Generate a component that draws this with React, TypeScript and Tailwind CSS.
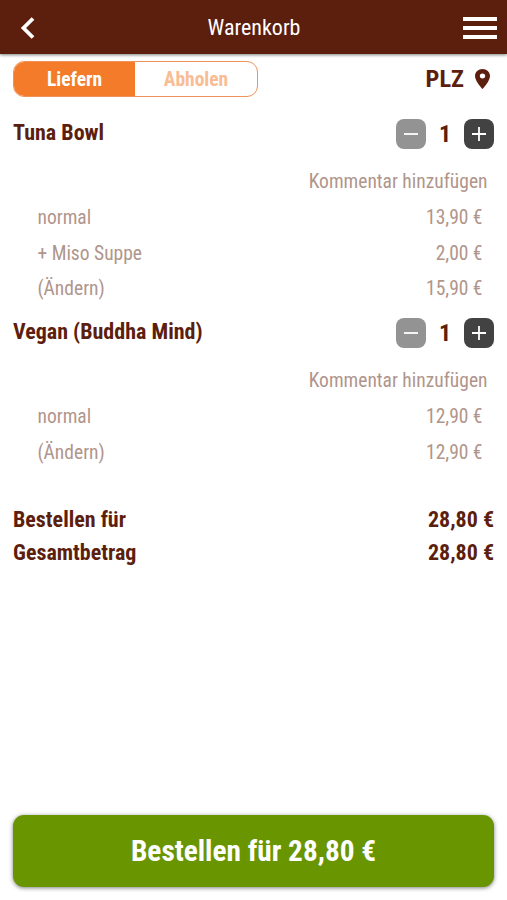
type Line = { label: string; price: string };
type Item = { name: string; quantity: number; lines: Line[] };

const items: Item[] = [
  {
    name: "Tuna Bowl",
    quantity: 1,
    lines: [
      { label: "normal", price: "13,90 €" },
      { label: "+ Miso Suppe", price: "2,00 €" },
      { label: "(Ändern)", price: "15,90 €" },
    ],
  },
  {
    name: "Vegan (Buddha Mind)",
    quantity: 1,
    lines: [
      { label: "normal", price: "12,90 €" },
      { label: "(Ändern)", price: "12,90 €" },
    ],
  },
];

const totals: Line[] = [
  { label: "Bestellen für", price: "28,80 €" },
  { label: "Gesamtbetrag", price: "28,80 €" },
];

function Header() {
  return (
    <header className="grid h-[54px] shrink-0 grid-cols-[1fr_auto_1fr] items-center bg-[#5c1e0d] pr-[10px] pl-[11px] text-white shadow-[0_1px_3px_rgba(0,0,0,0.5)]">
      <button aria-label="Zurück" className="w-[34px] pt-px pl-[9px]">
        <svg viewBox="0 0 15 22" className="h-[22px] w-[15px]" fill="none" stroke="currentColor" strokeWidth="3.8">
          <path d="M13 1.5 3.5 11l9.5 9.5" />
        </svg>
      </button>
      <h1 className="pt-0.5 text-[22px] leading-8">Warenkorb</h1>
      <button aria-label="Menü" className="flex w-[34px] flex-col gap-[5px] justify-self-end pt-0.5">
        <span className="h-1 w-full bg-white" />
        <span className="h-1 w-full bg-white" />
        <span className="h-1 w-full bg-white" />
      </button>
    </header>
  );
}

function DeliveryBar() {
  return (
    <div className="flex h-9 items-center justify-between">
      <div className="flex h-full w-[245px] overflow-hidden rounded-[11px] border border-[#f0935a] text-[19.5px] font-bold">
        <button className="w-[121px] bg-[#f47b29] pt-0.5 text-white">Liefern</button>
        <button className="flex-1 pt-0.5 text-[#f8bd94]">Abholen</button>
      </div>
      <button className="flex items-center gap-[11px] pr-1 text-[24.4px] font-bold">
        PLZ
        <svg viewBox="5 2 14 20" className="h-5 w-[15px]" preserveAspectRatio="none" fill="currentColor">
          <path d="M12 2C8.13 2 5 5.13 5 9c0 5.25 7 13 7 13s7-7.75 7-13c0-3.87-3.13-7-7-7zm0 9.5a2.5 2.5 0 0 1 0-5 2.5 2.5 0 0 1 0 5z" />
        </svg>
      </button>
    </div>
  );
}

function Stepper({ value }: { value: number }) {
  return (
    <div className="flex items-center text-white">
      <button aria-label="Weniger" className="flex size-[30px] items-center justify-center rounded-[8px] bg-[#939393]">
        <svg viewBox="0 0 14 14" className="size-3.5" stroke="currentColor" strokeWidth="1.8">
          <path d="M0 7h14" />
        </svg>
      </button>
      <span className="w-[38px] text-center text-[24px] leading-[30px] font-bold text-[#5c1e0d]">{value}</span>
      <button aria-label="Mehr" className="flex size-[30px] items-center justify-center rounded-[8px] bg-[#424242]">
        <svg viewBox="0 0 14 14" className="size-3.5" stroke="currentColor" strokeWidth="1.8">
          <path d="M0 7h14M7 0v14" />
        </svg>
      </button>
    </div>
  );
}

function CartItem({ item }: { item: Item }) {
  return (
    <section>
      <div className="flex h-[30px] items-center justify-between">
        <h2 className="pb-[3px] text-[22px] leading-[26px] font-bold">{item.name}</h2>
        <Stepper value={item.quantity} />
      </div>
      <div className="pt-[15px] text-[19.5px] text-[#b0958b]">
        <div className="pr-[6.5px] text-right leading-9">Kommentar hinzufügen</div>
        {item.lines.map((line) => (
          <div key={line.label} className="flex justify-between pr-[11.5px] pl-[24.5px] leading-[35.5px]">
            <span>{line.label}</span>
            <span>{line.price}</span>
          </div>
        ))}
      </div>
    </section>
  );
}

export default function App() {
  return (
    <div className="flex h-[900px] w-[507px] flex-col overflow-hidden bg-white font-['Roboto_Condensed',Roboto,sans-serif] text-[#5c1e0d]">
      <Header />
      <main className="flex flex-1 flex-col px-[13px] pt-[7px] pb-[13px]">
        <DeliveryBar />
        <div className="flex flex-col gap-[11.5px] pt-[22px]">
          {items.map((item) => (
            <CartItem key={item.name} item={item} />
          ))}
        </div>
        <div className="pt-[32.5px] text-[22px] leading-[33px] font-bold">
          {totals.map((total) => (
            <div key={total.label} className="flex justify-between">
              <span>{total.label}</span>
              <span>{total.price}</span>
            </div>
          ))}
        </div>
        <button className="mt-auto h-[72px] rounded-[11px] bg-[#699500] pt-0.5 text-[29.3px] font-bold text-white shadow-[0_1px_4px_rgba(0,0,0,0.5)]">
          Bestellen für 28,80 €
        </button>
      </main>
    </div>
  );
}
